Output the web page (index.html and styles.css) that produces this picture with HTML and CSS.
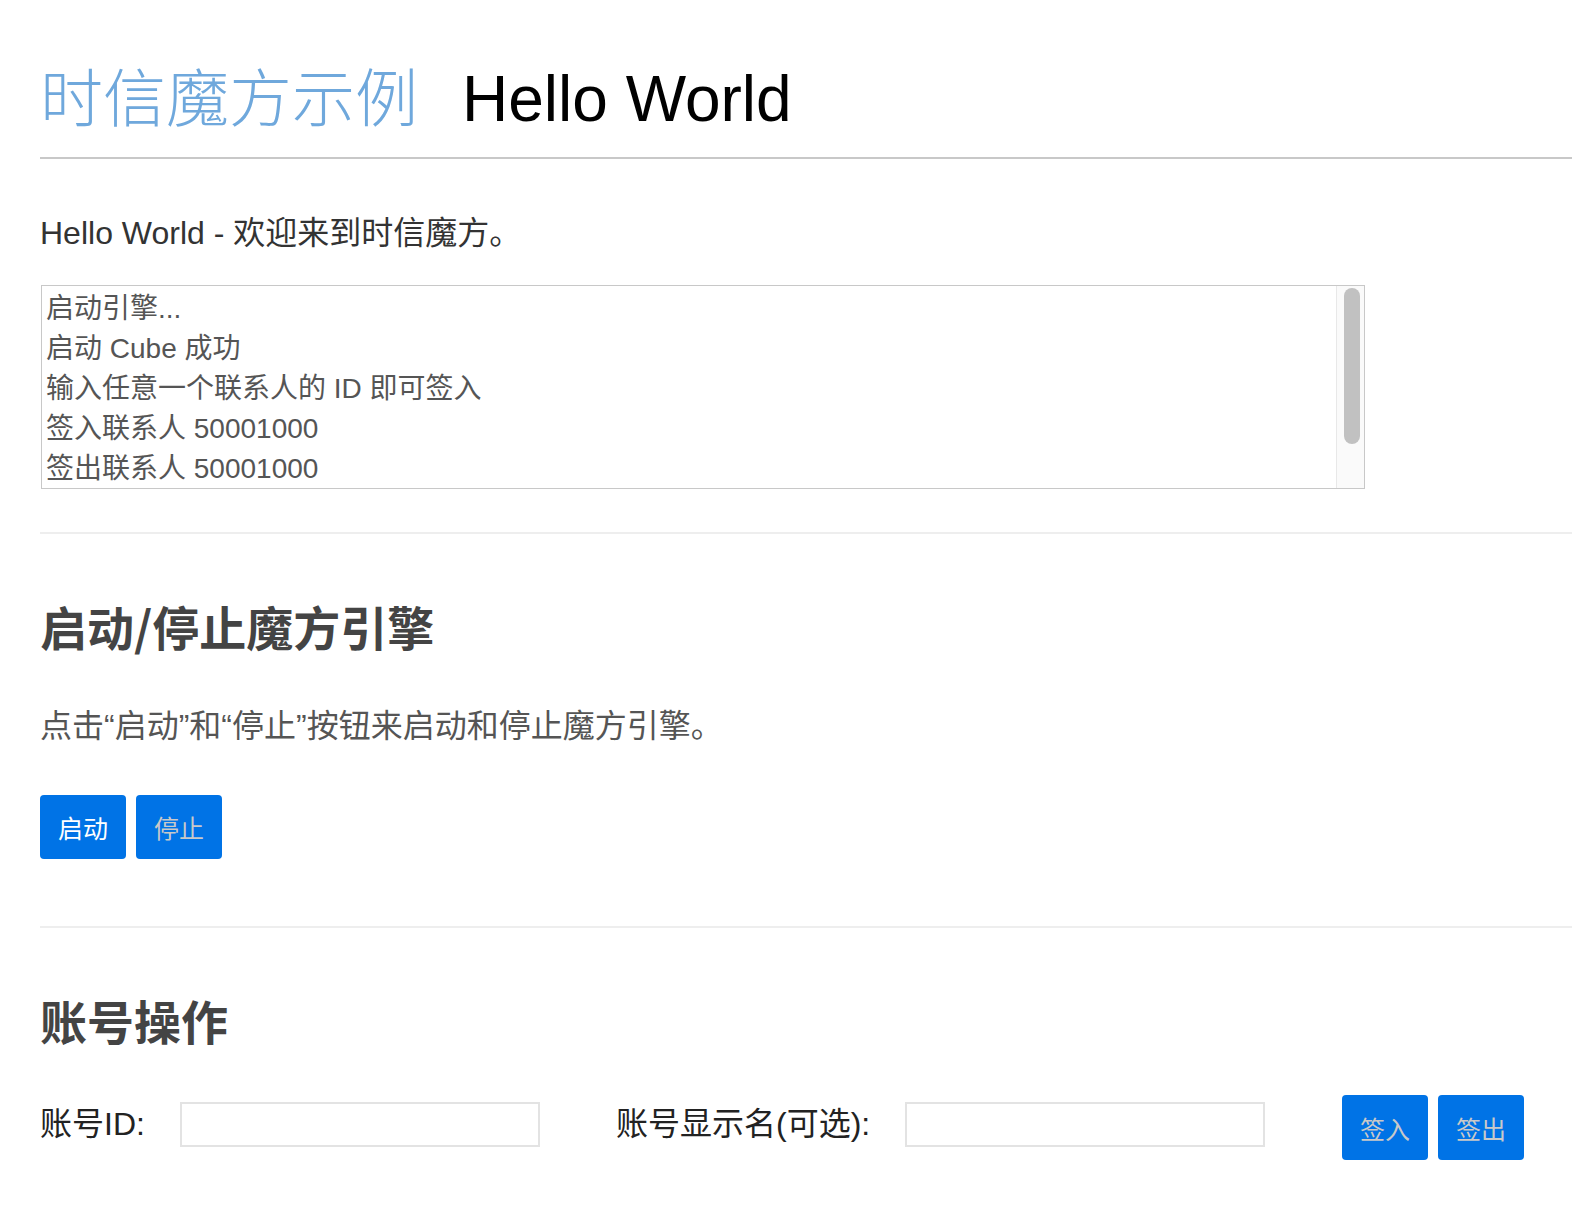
FILE: index.html
```html
<!DOCTYPE html>
<html lang="zh-CN">
<head>
<meta charset="utf-8">
<title>时信魔方示例 Hello World</title>
<link rel="stylesheet" href="styles.css">
</head>
<body>
<div class="page">
  <header class="title">
    <span class="brand">时信魔方示例</span>
    <span class="sub">Hello World</span>
  </header>
  <hr class="rule-strong">
  <p class="intro">Hello World - 欢迎来到时信魔方。</p>
  <div class="log">
    <div class="log-text">启动引擎...
启动 Cube 成功
输入任意一个联系人的 ID 即可签入
签入联系人 50001000
签出联系人 50001000</div>
    <div class="log-track"><div class="log-thumb"></div></div>
  </div>
  <hr class="rule">
  <section class="block">
    <h2 class="heading">启动/停止魔方引擎</h2>
    <p class="desc">点击“启动”和“停止”按钮来启动和停止魔方引擎。</p>
    <div class="btns">
      <button class="btn">启动</button>
      <button class="btn btn-muted">停止</button>
    </div>
  </section>
  <hr class="rule">
  <section class="block">
    <h2 class="heading">账号操作</h2>
    <div class="form-row">
      <label class="label">账号ID:</label>
      <input class="field" type="text">
      <label class="label label-2">账号显示名(可选):</label>
      <input class="field" type="text">
      <div class="btns btns-form">
        <button class="btn btn-muted">签入</button>
        <button class="btn btn-muted">签出</button>
      </div>
    </div>
  </section>
</div>
</body>
</html>
```

FILE: styles.css
```css
html, body {
  margin: 0;
  padding: 0;
  background: #fff;
}
body {
  font-family: "Liberation Sans", Arial, "Noto Sans CJK SC", sans-serif;
  color: #333;
}
.page {
  padding-left: 40px;
}
.title {
  display: flex;
  align-items: baseline;
  gap: 44px;
  margin: 0;
  padding-top: 62px;
  height: 101px;
  box-sizing: border-box;
  line-height: 1;
}
.brand {
  font-family: "Noto Sans CJK SC", sans-serif;
  font-weight: 300;
  font-size: 63px;
  color: #6fa8dc;
}
.sub {
  font-size: 64px;
  color: #000;
}
.rule-strong {
  border: 0;
  height: 2px;
  background: #c8c8c8;
  margin: 56px 0 0 0;
}
.rule {
  border: 0;
  height: 2px;
  background: #eeeeee;
  margin: 0;
}
.intro {
  margin: 54px 0 0 0;
  font-size: 32px;
  line-height: 40px;
  color: #333;
}
.log {
  display: flex;
  margin: 32px 0 43px 1px;
  width: 1324px;
  height: 204px;
  box-sizing: border-box;
  border: 1px solid #c8c8c8;
  background: #fff;
}
.log-text {
  flex: 1;
  padding: 3px 4px;
  overflow: hidden;
  white-space: pre-line;
  font-size: 28px;
  line-height: 40px;
  color: #555;
}
.log-track {
  width: 28px;
  box-sizing: border-box;
  border-left: 1px solid #e8e8e8;
  background: #fafafa;
  padding: 2px 4px 0 7px;
}
.log-thumb {
  width: 16px;
  height: 156px;
  border-radius: 8px;
  background: #c1c1c1;
}
.block {
  padding-top: 60px;
  padding-bottom: 67px;
}
.heading {
  margin: 0;
  font-family: "Noto Sans CJK SC", sans-serif;
  font-weight: 700;
  font-size: 47px;
  line-height: 64px;
  color: #444;
}
.desc {
  margin: 48px 0 0 0;
  font-size: 32px;
  line-height: 40px;
  color: #555;
}
.btns {
  display: flex;
  gap: 10px;
  margin-top: 49px;
}
.btn {
  width: 86px;
  height: 64px;
  border: 0;
  border-radius: 4px;
  background: #0073e6;
  color: #fff;
  font-family: "Noto Sans CJK SC", sans-serif;
  font-size: 25px;
  padding: 0;
}
.btn-muted {
  color: #c9c9c9;
}
.form-row {
  display: flex;
  align-items: flex-start;
  margin-top: 43px;
}
.label {
  font-size: 32px;
  line-height: 45px;
  margin-top: 7px;
  color: #222;
  width: 140px;
}
.label-2 {
  margin-left: 76px;
  width: 289px;
}
.field {
  width: 360px;
  height: 45px;
  margin-top: 7px;
  box-sizing: border-box;
  border: 2px solid #e3e3e3;
  padding: 0 8px;
  font-size: 24px;
}
.btns-form {
  margin: 0 0 0 77px;
}
.btns-form .btn {
  height: 65px;
}
```
